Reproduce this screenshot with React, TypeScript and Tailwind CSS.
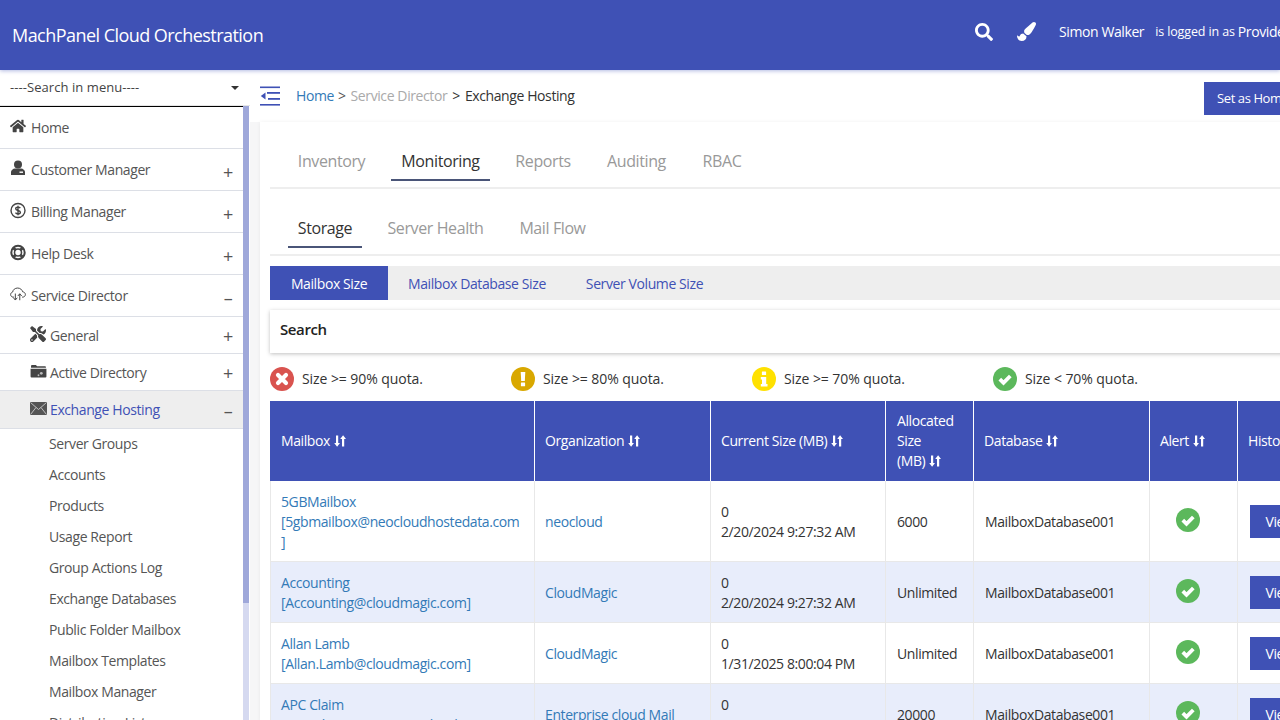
import React from "react";
import { FaHome, FaTools, FaSearch, FaPaintBrush } from "react-icons/fa";

const FONT = "font-['Open_Sans','Noto_Sans',sans-serif] tracking-[-0.025em]";

const SUB_ITEMS = [
  "Server Groups",
  "Accounts",
  "Products",
  "Usage Report",
  "Group Actions Log",
  "Exchange Databases",
  "Public Folder Mailbox",
  "Mailbox Templates",
  "Mailbox Manager",
  "Distribution Lists",
];

const UserIcon = () => (
  <svg viewBox="0 0 16 16" className="w-[16px] h-[16px]" fill="currentColor">
    <circle cx="8" cy="4.5" r="4" />
    <path d="M1 15v-3c0-2 2-3.4 4-3.6h6c2 .2 4 1.6 4 3.6v3H1z" />
    <rect x="9.5" y="11.5" width="3.5" height="1.4" fill="#fff" />
  </svg>
);

const DollarIcon = () => (
  <svg viewBox="0 0 16 16" className="w-[17px] h-[17px]" fill="none" stroke="currentColor">
    <circle cx="8" cy="8" r="7" strokeWidth="1.4" />
    <path d="M10.3 5.7C9.8 4.9 9 4.6 8 4.6c-1.300 0-2.300.7-2.300 1.700 0 2.300 4.700 1.100 4.700 3.400 0 1-1 1.700-2.400 1.700-1.100 0-2-.4-2.500-1.200M8 3.200v9.600" strokeWidth="1.400" />
  </svg>
);

const RingIcon = () => (
  <svg viewBox="0 0 16 16" className="w-[17px] h-[17px]" fill="none" stroke="currentColor">
    <circle cx="8" cy="8" r="6.700" strokeWidth="2" />
    <circle cx="8" cy="8" r="3.500" strokeWidth="1.600" />
    <path d="M3.500 3.500l2.200 2.200M12.500 3.500l-2.200 2.200M3.500 12.500l2.200-2.200M12.500 12.500l-2.200-2.200" strokeWidth="3" />
  </svg>
);

const CloudIcon = () => (
  <svg viewBox="0 0 18 16" className="w-[17px] h-[16px]" fill="none" stroke="currentColor" strokeWidth="1.100">
    <path d="M4.500 11.500H3.600C2 11.500.7 10.200.7 8.600c0-1.400 1-2.500 2.300-2.800C3.300 3.300 5.500 1.300 8.600 1.300c2.800 0 5 1.800 5.600 4.200 1.800.2 3.100 1.500 3.100 3.100 0 1.600-1.300 2.900-3 2.900h-.8" />
    <path d="M6 7.500v7M3.800 12.200L6 14.800l2.200-2.600M11 15V8M8.800 10.300L11 7.700l2.200 2.600" />
  </svg>
);

const FolderIcon = () => (
  <svg viewBox="0 0 18 15" className="w-[17px] h-[14px]" fill="currentColor">
    <path d="M1 3.500V2.200C1 1.500 1.500 1 2.200 1h4l1.300 1.500h8.300c.7 0 1.200.5 1.200 1.200v.3H1z" />
    <path d="M.5 5h17v8.500c0 .6-.4 1-1 1h-15c-.6 0-1-.4-1-1V5z" />
    <circle cx="12" cy="10" r="1.500" fill="#bbb" />
    <circle cx="9" cy="12" r="1" fill="#bbb" />
  </svg>
);

const MailIcon = () => (
  <svg viewBox="0 0 17 13" className="w-[17px] h-[13px]">
    <rect x="0" y="0" width="17" height="13" fill="#555" />
    <path d="M0.500 0.500L8.500 7.500L16.500 0.500M0.500 12.500L6 5.500M16.500 12.500L11 5.500" fill="none" stroke="#ccc" strokeWidth="0.900" />
  </svg>
);

const SortIcon = () => (
  <svg viewBox="0 0 12 12" className="inline-block w-[12px] h-[12px] ml-[4px] align-[-1px]" fill="#fff">
    <path d="M2 0.500h2.200v7.500h1.800L3.100 11.700 0.200 8H2z" />
    <path d="M8 11.500h2.200V4H12L9.100 0.300 6.200 4H8z" />
  </svg>
);

const MenuToggle = () => (
  <svg viewBox="0 0 20 20" className="w-[20px] h-[20px]" fill="#3f51b5">
    <rect x="0" y="0.500" width="20" height="1.600" />
    <rect x="7" y="6" width="13" height="1.800" />
    <rect x="8" y="12" width="12" height="1.800" />
    <rect x="0" y="18" width="20" height="1.600" />
    <path d="M5.500 6.500v7L0.800 10z" />
  </svg>
);

const StatusCircle = ({ color, children }: { color: string; children: React.ReactNode }) => (
  <svg viewBox="0 0 24 24" className="w-[24px] h-[24px] shrink-0">
    <circle cx="12" cy="12" r="12" fill={color} />
    {children}
  </svg>
);

const CheckMark = () => (
  <StatusCircle color="#5cb85c">
    <path d="M6.800 12.200l3.700 3.600 6.800-6.800" fill="none" stroke="#fff" strokeWidth="3.800" />
  </StatusCircle>
);

const MenuRow = ({
  icon,
  label,
  sign,
}: {
  icon: React.ReactNode;
  label: string;
  sign?: string;
}) => (
  <div className="h-[42px] flex items-center pl-[10px] pr-[7px] border-b border-[#dcdfe6] text-[#555] text-[14px]">
    <span className="w-[16px] flex justify-center text-[#444] -mt-[3px]">{icon}</span>
    <span className="ml-[5px] -mt-[1px]">{label}</span>
    {sign && <span className="ml-auto w-[16px] text-center text-[18px] leading-none mt-[5px]">{sign}</span>}
  </div>
);

const SubRow = ({
  icon,
  label,
  sign,
  active,
}: {
  icon: React.ReactNode;
  label: string;
  sign: string;
  active?: boolean;
}) => (
  <div
    className={`flex items-center pl-[29px] pr-[7px] border-b border-[#dcdfe6] text-[14px] ${
      active ? "h-[38px] bg-[#eeeeee] text-[#3f51b5]" : "h-[37px] text-[#555]"
    }`}
  >
    <span className="w-[18px] flex justify-center text-[#444] -mt-[3px]">{icon}</span>
    <span className="ml-[3px]">{label}</span>
    <span className="ml-auto w-[16px] text-center text-[18px] leading-none text-[#555] mt-[2px]">{sign}</span>
  </div>
);

const Sidebar = () => (
  <aside className="w-[250px] shrink-0 bg-white flex flex-col">
    <div className="h-[36px] shrink-0 flex items-center pl-[10px] pr-[11px] text-[13px] tracking-[0.005em] text-[#444] border-b border-[#e5e5e5]">
      <span>----Search in menu----</span>
      <span className="ml-auto w-0 h-0 border-x-[4px] border-x-transparent border-t-[4px] border-t-[#333]" />
    </div>
    <div className="flex flex-1 w-[249px] min-h-0">
      <div className="w-[243px] shrink-0 border-t border-black">
        <MenuRow icon={<FaHome size={16} />} label="Home" />
        <MenuRow icon={<UserIcon />} label="Customer Manager" sign="+" />
        <MenuRow icon={<DollarIcon />} label="Billing Manager" sign="+" />
        <MenuRow icon={<RingIcon />} label="Help Desk" sign="+" />
        <MenuRow icon={<CloudIcon />} label="Service Director" sign="–" />
        <SubRow icon={<FaTools size={16} />} label="General" sign="+" />
        <SubRow icon={<FolderIcon />} label="Active Directory" sign="+" />
        <SubRow icon={<MailIcon />} label="Exchange Hosting" sign="–" active />
        <div className="-mt-[1px]">
          {SUB_ITEMS.map((item) => (
            <div key={item} className="h-[31px] flex items-center pl-[49px] text-[14px] text-[#555]">
              {item}
            </div>
          ))}
        </div>
      </div>
      <div className="w-[6px] bg-[#d5d9f0]">
        <div className="h-[497px] bg-[#9fa8da]" />
      </div>
    </div>
  </aside>
);

const TopTab = ({ label, active, w }: { label: string; active?: boolean; w: string }) => (
  <div
    className={`h-[38px] flex items-center justify-center whitespace-nowrap text-[16px] border-b-2 ${w} ${
      active ? "text-[#333] border-[#4a5578]" : "text-[#999] border-transparent"
    }`}
  >
    {label}
  </div>
);

type Row = {
  mailbox: string[];
  org: string;
  size: string[];
  allocated: string;
  h: string;
  shaded?: boolean;
};

const ROWS: Row[] = [
  {
    mailbox: ["5GBMailbox", "[5gbmailbox@neocloudhostedata.com", "]"],
    org: "neocloud",
    size: ["0", "2/20/2024 9:27:32 AM"],
    allocated: "6000",
    h: "h-[81px]",
  },
  {
    mailbox: ["Accounting", "[Accounting@cloudmagic.com]"],
    org: "CloudMagic",
    size: ["0", "2/20/2024 9:27:32 AM"],
    allocated: "Unlimited",
    h: "h-[61px]",
    shaded: true,
  },
  {
    mailbox: ["Allan Lamb", "[Allan.Lamb@cloudmagic.com]"],
    org: "CloudMagic",
    size: ["0", "1/31/2025 8:00:04 PM"],
    allocated: "Unlimited",
    h: "h-[61px]",
  },
  {
    mailbox: ["APC Claim", "[APC.Claim@enterprisecloud.com]"],
    org: "Enterprise cloud Mail",
    size: ["0", "1/31/2025 8:00:04 PM"],
    allocated: "20000",
    h: "h-[61px]",
    shaded: true,
  },
];

const HEAD_CELL = "border-r border-white pl-[10px] pr-[6px] flex items-center text-white text-[14px] leading-[20px]";
const BODY_CELL = "border-r border-[#e8e8e8] pl-[10px] pr-[6px] pt-[2px] flex items-center text-[14px] leading-[20px] text-[#333]";

const COLS = "grid grid-cols-[265px_176px_175px_88px_176px_88px_120px] w-[1088px]";

const Legend = ({ icon, label }: { icon: React.ReactNode; label: string }) => (
  <div className="w-[241px] shrink-0 flex items-center gap-[8px] text-[14px] text-[#333] tracking-[-0.005em]">
    {icon}
    <span className="-mt-[1px]">{label}</span>
  </div>
);

export default function App() {
  return (
    <div className={`w-[1280px] h-[720px] overflow-hidden bg-[#f6f6f7] flex flex-col ${FONT}`}>
      <header className="h-[70px] shrink-0 bg-[#3f51b5] shadow-[0_1px_4px_rgba(63,81,181,0.4)] flex items-center pl-[12px] text-white relative z-10 overflow-hidden">
        <h1 className="text-[18px] font-medium tracking-[-0.03em]">MachPanel Cloud Orchestration</h1>
        <div className="ml-auto w-[305px] shrink-0 flex items-center -mt-[7px] whitespace-nowrap">
          <FaSearch size={18} className="shrink-0" />
          <FaPaintBrush size={19} className="ml-[24px] shrink-0" />
          <span className="ml-[23px] text-[14px]">Simon Walker</span>
          <span className="ml-[11px] text-[12.5px] tracking-[-0.01em] mt-[1px]">is logged in as</span>
          <span className="ml-[3px] text-[14px]">Provider</span>
        </div>
      </header>

      <div className="flex flex-1 min-h-0">
        <Sidebar />

        <main className="flex-1 min-w-0 pl-[10px]">
          <div className="h-[52px] flex items-center text-[14px] whitespace-nowrap bg-white -ml-[10px] pl-[10px]">
            <MenuToggle />
            <div className="ml-[16px] -mt-[2px]">
              <span className="text-[#337ab7]">Home</span>
              <span className="text-[#555] ml-[4px] mr-[5px]">&gt;</span>
              <span className="text-[#aaa]">Service Director</span>
              <span className="text-[#333] ml-[5px] mr-[5px]">&gt;</span>
              <span className="text-[#333]">Exchange Hosting</span>
            </div>
            <div className="ml-auto shrink-0 w-[76px] h-[33px] mt-[4px] pt-[1px] bg-[#3f51b5] text-white text-[13px] flex items-center pl-[13px] overflow-hidden">
              Set as Home
            </div>
          </div>

          <section className="bg-white w-[1100px] h-[600px] pl-[10px] pt-[21px] shadow-[0_0_4px_rgba(0,0,0,0.06)]">
            <div className="flex border-b-2 border-[#eeeeee] pl-[18px] h-[46px] gap-[16px]">
              <TopTab label="Inventory" w="w-[87px]" />
              <TopTab label="Monitoring" active w="w-[99px]" />
              <TopTab label="Reports" w="w-[74px]" />
              <TopTab label="Auditing" w="w-[81px]" />
              <TopTab label="RBAC" w="w-[58px]" />
            </div>

            <div className="flex border-b-2 border-[#eeeeee] pl-[18px] h-[67px] items-end gap-[16px]">
              <div className="mb-[6px]">
                <TopTab label="Storage" active w="w-[74px]" />
              </div>
              <div className="mb-[6px]">
                <TopTab label="Server Health" w="w-[115px]" />
              </div>
              <div className="mb-[6px]">
                <TopTab label="Mail Flow" w="w-[87px]" />
              </div>
            </div>

            <div className="mt-[10px] h-[34px] bg-[#eeeeee] flex text-[14px] text-[#3f51b5]">
              <div className="w-[118px] bg-[#3f51b5] text-white flex items-center justify-center">Mailbox Size</div>
              <div className="px-[20px] flex items-center">Mailbox Database Size</div>
              <div className="px-[20px] flex items-center">Server Volume Size</div>
            </div>

            <div className="mt-[10px] h-[43px] bg-white flex items-center pl-[10px] text-[15px] font-semibold text-[#222] shadow-[0_1px_4px_rgba(0,0,0,0.25)]">
              <span className="-mt-[4px]">Search</span>
            </div>

            <div className="mt-[14px] flex h-[24px]">
              <Legend
                icon={
                  <StatusCircle color="#d9534f">
                    <path d="M8 8l8 8M16 8l-8 8" stroke="#fff" strokeWidth="4.200" strokeLinecap="round" />
                  </StatusCircle>
                }
                label="Size >= 90% quota."
              />
              <Legend
                icon={
                  <StatusCircle color="#d9a800">
                    <path d="M9.700 5h4.600l-.5 9h-3.600z" fill="#fff" />
                    <rect x="9.900" y="15.500" width="4.200" height="3.800" rx="0.500" fill="#fff" />
                  </StatusCircle>
                }
                label="Size >= 80% quota."
              />
              <Legend
                icon={
                  <StatusCircle color="#ffe100">
                    <rect x="9.900" y="4.500" width="4.200" height="3.600" rx="0.500" fill="#fff" />
                    <path d="M8.800 10h5.400v7h1.300v2.600H8.800V17h1.200v-4.400H8.800z" fill="#fff" />
                  </StatusCircle>
                }
                label="Size >= 70% quota."
              />
              <Legend icon={<CheckMark />} label="Size < 70% quota." />
            </div>

            <div className="mt-[10px]">
              <div className={`${COLS} h-[80px] bg-[#3f51b5]`}>
                <div className={`${HEAD_CELL} !pl-[11px]`}>
                  <span>Mailbox<SortIcon /></span>
                </div>
                <div className={HEAD_CELL}>
                  <span>Organization<SortIcon /></span>
                </div>
                <div className={HEAD_CELL}>
                  <span>Current Size (MB)<SortIcon /></span>
                </div>
                <div className={`${HEAD_CELL} !pl-[11px]`}>
                  <span>
                    Allocated
                    <br />
                    Size
                    <br />
                    (MB)
                    <SortIcon />
                  </span>
                </div>
                <div className={HEAD_CELL}>
                  <span>Database<SortIcon /></span>
                </div>
                <div className={HEAD_CELL}>
                  <span>Alert<SortIcon /></span>
                </div>
                <div className={HEAD_CELL}>
                  <span>History</span>
                </div>
              </div>

              {ROWS.map((row) => (
                <div
                  key={row.mailbox[0]}
                  className={`${COLS} ${row.h} border-b border-[#e8e8e8] ${row.shaded ? "bg-[#e8edfb]" : "bg-white"}`}
                >
                  <div className={`${BODY_CELL} border-l`}>
                    <div className="text-[#337ab7]">
                      {row.mailbox.map((line) => (
                        <div key={line}>{line}</div>
                      ))}
                    </div>
                  </div>
                  <div className={`${BODY_CELL} text-[#337ab7]`}>{row.org}</div>
                  <div className={BODY_CELL}>
                    <div>
                      {row.size.map((line) => (
                        <div key={line}>{line}</div>
                      ))}
                    </div>
                  </div>
                  <div className={`${BODY_CELL} !pl-[11px]`}>{row.allocated}</div>
                  <div className={`${BODY_CELL} !pl-[11px]`}>MailboxDatabase001</div>
                  <div className={`${BODY_CELL} justify-center !pl-0 !pr-[12px]`}>
                    <div className="-mt-[4px]">
                      <CheckMark />
                    </div>
                  </div>
                  <div className={`${BODY_CELL} !pl-[12px]`}>
                    <div className="w-[60px] h-[33px] shrink-0 bg-[#3f51b5] text-white flex items-center justify-center -mt-[1px]">
                      View
                    </div>
                  </div>
                </div>
              ))}
            </div>
          </section>
        </main>
      </div>
    </div>
  );
}
